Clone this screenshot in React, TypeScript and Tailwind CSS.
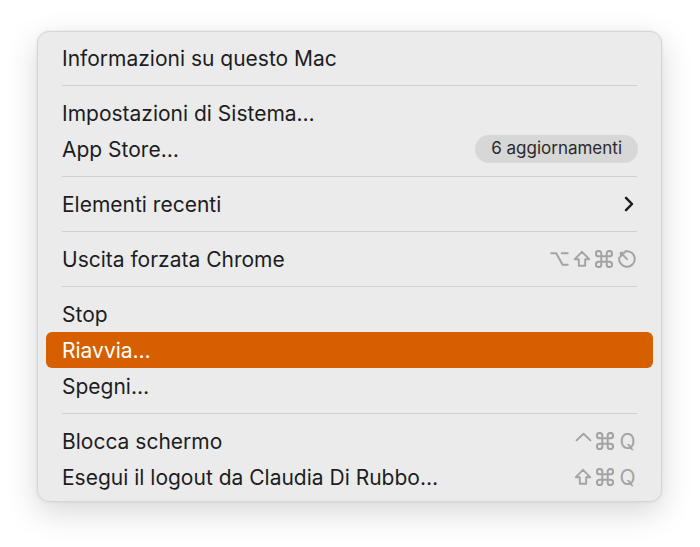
import React from "react";

const font = { fontFamily: "Inter, 'Noto Sans', 'Liberation Sans', sans-serif" };

function OptionKey() {
    return (
        <svg width="19" height="16" viewBox="0 0 19 16" fill="none" stroke="currentColor" strokeWidth="2" strokeLinecap="round" strokeLinejoin="round">
            <path d="M1.2 2.2H6.2L12.6 13.8H17.8M11.8 2.2H17.8" />
        </svg>
    );
}

function ShiftKey() {
    return (
        <svg width="18" height="18" viewBox="0 0 18 18" fill="none" stroke="currentColor" strokeWidth="1.9" strokeLinejoin="round">
            <path d="M9 1.8L16.2 9.2H12.2V15.8H5.8V9.2H1.8Z" />
        </svg>
    );
}

function CmdKey() {
    return (
        <svg width="18" height="18" viewBox="2 2 20 20" fill="none" stroke="currentColor" strokeWidth="2.2" strokeLinecap="round" strokeLinejoin="round">
            <path d="M15 6v12a3 3 0 1 0 3-3H6a3 3 0 1 0 3 3V6a3 3 0 1 0-3 3h12a3 3 0 1 0-3-3" />
        </svg>
    );
}

function CtrlKey() {
    return (
        <svg width="17" height="18" viewBox="0 0 17 18" fill="none" stroke="currentColor" strokeWidth="2" strokeLinecap="round" strokeLinejoin="round">
            <path d="M1.6 8.4L8.5 1.8L15.4 8.4" />
        </svg>
    );
}

function EscKey() {
    return (
        <svg width="20" height="20" viewBox="0 0 20 20" fill="none" stroke="currentColor" strokeWidth="2" strokeLinecap="round" strokeLinejoin="round">
            <path d="M8.4 2.3A7.8 7.8 0 1 1 2.3 8.4" />
            <path d="M10 10.1L3.8 3.8M3.8 3.8V7.6M3.8 3.8H7.6" />
        </svg>
    );
}

function Chevron() {
    return (
        <svg width="10" height="16" viewBox="0 0 10 16" fill="none" stroke="#1d1d1f" strokeWidth="2.5" strokeLinecap="round" strokeLinejoin="round">
            <path d="M2 1.8L8 8L2 14.2" />
        </svg>
    );
}

function Sep() {
    return (
        <div className="h-[19px] flex items-center px-[16px]">
            <div className="h-px w-full bg-[#cfcfcf]" />
        </div>
    );
}

function Row({ label, right, active }: { label: string; right?: React.ReactNode; active?: boolean }) {
    return (
        <div className={"h-[36px] flex items-center justify-between px-[16px] rounded-[6px] " + (active ? "bg-[#d65f00] text-white" : "text-[#1d1d1f]")}>
            <span className="text-[21px] leading-none">{label}</span>
            {right}
        </div>
    );
}

function Keys({ children }: { children: React.ReactNode }) {
    return <div className="flex items-center gap-[4px] text-[#a3a3a3]">{children}</div>;
}

const Q = <span className="text-[21px] leading-none text-[#a3a3a3] w-[19px] text-center">Q</span>;

export default function App() {
    return (
        <div className="w-full h-[547px] bg-white pt-[31px] pl-[37px]" style={font}>
            <div className="w-[625px] rounded-[12px] bg-[#ebebeb] border border-[#d6d6d6] shadow-[0_10px_32px_rgba(0,0,0,0.16),0_0_3px_rgba(0,0,0,0.08)] px-[8px] pt-[8px] pb-[6px]">
                <Row label="Informazioni su questo Mac" />
                <Sep />
                <Row label="Impostazioni di Sistema…" />
                <Row
                    label="App Store…"
                    right={
                        <span className="h-[28px] px-[16px] mr-[-1px] flex items-center rounded-full bg-[#d7d7d7] text-[17px] text-[#2a2a2a]">
                            6 aggiornamenti
                        </span>
                    }
                />
                <Sep />
                <Row label="Elementi recenti" right={<span className="mr-[3px] flex"><Chevron /></span>} />
                <Sep />
                <Row
                    label="Uscita forzata Chrome"
                    right={
                        <Keys>
                            <OptionKey />
                            <ShiftKey />
                            <CmdKey />
                            <EscKey />
                        </Keys>
                    }
                />
                <Sep />
                <Row label="Stop" />
                <Row label="Riavvia…" active />
                <Row label="Spegni…" />
                <Sep />
                <Row
                    label="Blocca schermo"
                    right={
                        <Keys>
                            <CtrlKey />
                            <CmdKey />
                            {Q}
                        </Keys>
                    }
                />
                <Row
                    label="Esegui il logout da Claudia Di Rubbo…"
                    right={
                        <Keys>
                            <ShiftKey />
                            <CmdKey />
                            {Q}
                        </Keys>
                    }
                />
            </div>
        </div>
    );
}
